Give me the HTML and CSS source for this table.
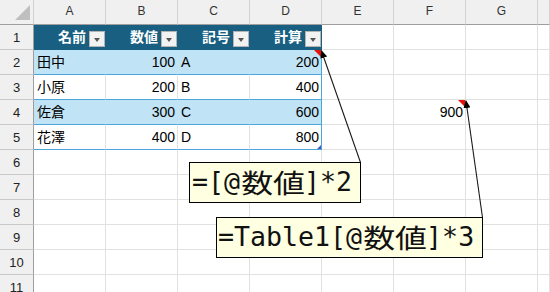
FILE: index.html
```html
<!DOCTYPE html>
<html lang="ja">
<head>
<meta charset="utf-8">
<title>Table</title>
<link rel="stylesheet" href="styles.css">
</head>
<body>
<div class="stage">
  <div class="sheet">
    <div class="c corner"><span class="tri"></span></div>
    <div class="c hd">A</div>
    <div class="c hd">B</div>
    <div class="c hd">C</div>
    <div class="c hd">D</div>
    <div class="c hd">E</div>
    <div class="c hd">F</div>
    <div class="c hd">G</div>
    <div class="c hd"></div>

    <div class="c rh">1</div>
    <div class="c th">名前<span class="fb"></span></div>
    <div class="c th">数値<span class="fb"></span></div>
    <div class="c th">記号<span class="fb"></span></div>
    <div class="c th">計算<span class="fb"></span></div>
    <div class="c"></div><div class="c"></div><div class="c"></div><div class="c"></div>

    <div class="c rh">2</div>
    <div class="c band">田中</div>
    <div class="c band n">100</div>
    <div class="c band">A</div>
    <div class="c band n last note">200</div>
    <div class="c"></div><div class="c"></div><div class="c"></div><div class="c"></div>

    <div class="c rh">3</div>
    <div class="c tr">小原</div>
    <div class="c tr n">200</div>
    <div class="c tr">B</div>
    <div class="c tr n last">400</div>
    <div class="c"></div><div class="c"></div><div class="c"></div><div class="c"></div>

    <div class="c rh">4</div>
    <div class="c band">佐倉</div>
    <div class="c band n">300</div>
    <div class="c band">C</div>
    <div class="c band n last">600</div>
    <div class="c"></div>
    <div class="c n note">900</div>
    <div class="c"></div><div class="c"></div>

    <div class="c rh">5</div>
    <div class="c tr">花澤</div>
    <div class="c tr n">400</div>
    <div class="c tr">D</div>
    <div class="c tr n last handle">800</div>
    <div class="c"></div><div class="c"></div><div class="c"></div><div class="c"></div>

    <div class="c rh">6</div>
    <div class="c"></div><div class="c"></div><div class="c"></div><div class="c"></div><div class="c"></div><div class="c"></div><div class="c"></div><div class="c"></div>
    <div class="c rh">7</div>
    <div class="c"></div><div class="c"></div><div class="c"></div><div class="c"></div><div class="c"></div><div class="c"></div><div class="c"></div><div class="c"></div>
    <div class="c rh">8</div>
    <div class="c"></div><div class="c"></div><div class="c"></div><div class="c"></div><div class="c"></div><div class="c"></div><div class="c"></div><div class="c"></div>
    <div class="c rh">9</div>
    <div class="c"></div><div class="c"></div><div class="c"></div><div class="c"></div><div class="c"></div><div class="c"></div><div class="c"></div><div class="c"></div>
    <div class="c rh">10</div>
    <div class="c"></div><div class="c"></div><div class="c"></div><div class="c"></div><div class="c"></div><div class="c"></div><div class="c"></div><div class="c"></div>
    <div class="c rh">11</div>
    <div class="c"></div><div class="c"></div><div class="c"></div><div class="c"></div><div class="c"></div><div class="c"></div><div class="c"></div><div class="c"></div>
  </div>

  <svg class="wires" width="550" height="292" viewBox="0 0 550 292">
    <defs>
      <marker id="ah" markerUnits="userSpaceOnUse" markerWidth="8" markerHeight="7" refX="7" refY="3.5" orient="auto">
        <path d="M0,0 L8,3.5 L0,7 z" fill="#000"/>
      </marker>
    </defs>
    <line x1="360.5" y1="162.5" x2="321.5" y2="51" stroke="#1a1a1a" stroke-width="1.1" marker-end="url(#ah)"/>
    <line x1="482.5" y1="217.5" x2="466" y2="101" stroke="#1a1a1a" stroke-width="1.1" marker-end="url(#ah)"/>
  </svg>

  <div class="callout one">=[@<span class="kj"><span>数値</span></span>]*2</div>
  <div class="callout two">=Table1[@<span class="kj"><span>数値</span></span>]*3</div>
</div>
</body>
</html>
```

FILE: styles.css
```css
* { box-sizing: border-box; }
html, body { margin: 0; padding: 0; background: #fff; overflow: hidden; }
body { font-family: "Liberation Sans", "Noto Sans CJK JP", sans-serif; }

.stage { position: relative; width: 550px; height: 292px; overflow: hidden; }

.sheet {
  display: grid;
  grid-template-columns: 34px repeat(7, 72px) 1fr;
  grid-auto-rows: 25px;
}

.c {
  position: relative;
  display: flex;
  align-items: center;
  padding: 0 3px;
  border-right: 1px solid #e1e1e1;
  border-bottom: 1px solid #e1e1e1;
  font-size: 14px;
  line-height: 1;
  color: #000;
  white-space: nowrap;
}

.corner { background: #f0f0f0; border-right-color: #d0d0d0; border-bottom-color: #9e9e9e; }
.corner .tri {
  position: absolute;
  right: 3px;
  bottom: 4px;
  width: 0; height: 0;
  border-left: 15px solid transparent;
  border-bottom: 15px solid #bfbfbf;
}

.hd {
  background: #f0f0f0;
  border-right-color: #d2d2d2;
  border-bottom-color: #9e9e9e;
  justify-content: center;
  padding-bottom: 3px;
  font-size: 12px;
  color: #333;
}

.rh {
  background: #f0f0f0;
  border-right-color: #9e9e9e;
  border-bottom-color: #c9c9c9;
  justify-content: center;
  font-size: 13px;
  color: #222;
}

.th {
  background: #185f82;
  border-color: #185f82;
  color: #fff;
  font-weight: bold;
  justify-content: flex-end;
  gap: 3px;
  padding: 0 0 0 0;
}
.fb {
  position: relative;
  width: 16px;
  height: 16px;
  margin-top: 4px;
  background: #f2f2f2;
  border: 1px solid #b4b4b4;
}
.fb::after {
  content: "";
  position: absolute;
  left: 4px;
  top: 6px;
  border-left: 3.5px solid transparent;
  border-right: 3.5px solid transparent;
  border-top: 4px solid #555;
}

.band {
  background: #c0e4f5;
  border-right-color: #c0e4f5;
  border-bottom-color: #4aa5db;
}
.tr { border-bottom-color: #4aa5db; }
.last { border-right-color: #4aa5db; }
.n { justify-content: flex-end; padding-right: 2px; }

.note::after {
  content: "";
  position: absolute;
  top: 0;
  right: 0;
  width: 0; height: 0;
  border-top: 7px solid #e8120c;
  border-left: 7px solid transparent;
}
.handle::after {
  content: "";
  position: absolute;
  right: 0;
  bottom: 0;
  width: 0; height: 0;
  border-bottom: 4px solid #4a5cc0;
  border-left: 4px solid transparent;
}

.wires { position: absolute; left: 0; top: 0; pointer-events: none; }

.callout {
  position: absolute;
  display: flex;
  align-items: center;
  height: 41px;
  background: #ffffe1;
  border: 1px solid #000;
  font-family: "DejaVu Sans Mono", "Noto Sans CJK JP", monospace;
  font-size: 26.6px;
  line-height: 1;
  color: #111;
  white-space: nowrap;
}
.callout.one { left: 189px; top: 162px; width: 172px; padding-left: 2px; }
.callout.two { left: 216px; top: 217px; width: 267px; padding-left: 1px; }
.kj { display: inline-block; width: 64px; font-family: "Noto Sans CJK JP", sans-serif; }
.kj span { display: inline-block; transform: scaleX(1.2); transform-origin: left center; padding-left: 1px; }
```
